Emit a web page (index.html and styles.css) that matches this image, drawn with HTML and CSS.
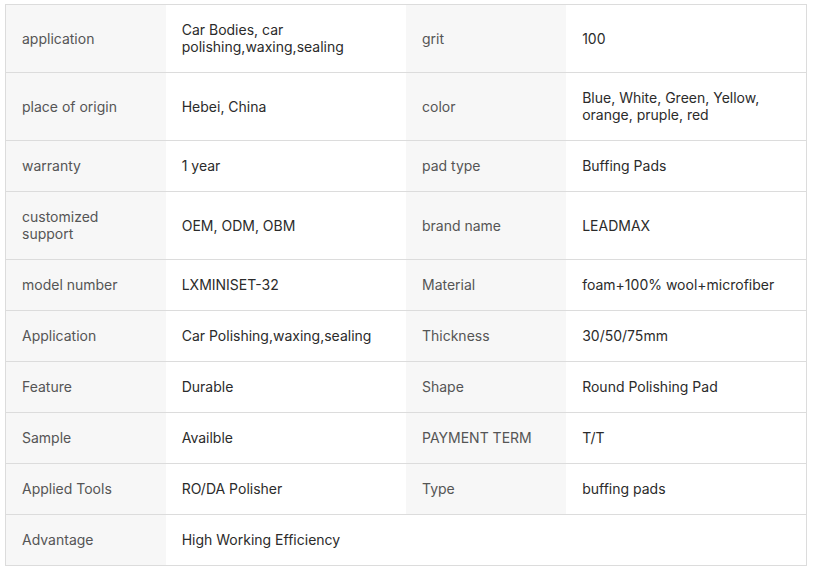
FILE: index.html
```html
<!DOCTYPE html>
<html>
<head>
<meta charset="utf-8">
<link rel="stylesheet" href="styles.css">
</head>
<body>
<div class="wrap">
<table class="spec">
<colgroup><col class="c-label"><col class="c-val"><col class="c-label"><col class="c-val"></colgroup>
<tbody>
<tr><td class="lbl">application</td><td class="val">Car Bodies, car polishing,waxing,sealing</td><td class="lbl">grit</td><td class="val">100</td></tr>
<tr><td class="lbl">place of origin</td><td class="val">Hebei, China</td><td class="lbl">color</td><td class="val">Blue, White, Green, Yellow, orange, pruple, red</td></tr>
<tr><td class="lbl">warranty</td><td class="val">1 year</td><td class="lbl">pad type</td><td class="val">Buffing Pads</td></tr>
<tr><td class="lbl">customized support</td><td class="val">OEM, ODM, OBM</td><td class="lbl">brand name</td><td class="val">LEADMAX</td></tr>
<tr><td class="lbl">model number</td><td class="val">LXMINISET-32</td><td class="lbl">Material</td><td class="val">foam+100% wool+microfiber</td></tr>
<tr><td class="lbl">Application</td><td class="val">Car Polishing,waxing,sealing</td><td class="lbl">Thickness</td><td class="val">30/50/75mm</td></tr>
<tr><td class="lbl">Feature</td><td class="val">Durable</td><td class="lbl">Shape</td><td class="val">Round Polishing Pad</td></tr>
<tr><td class="lbl">Sample</td><td class="val">Availble</td><td class="lbl">PAYMENT TERM</td><td class="val">T/T</td></tr>
<tr><td class="lbl">Applied Tools</td><td class="val">RO/DA Polisher</td><td class="lbl">Type</td><td class="val">buffing pads</td></tr>
<tr><td class="lbl">Advantage</td><td class="val">High Working Efficiency</td><td class="empty"></td><td class="empty"></td></tr>
</tbody>
</table>
</div>
</body>
</html>
```
FILE: styles.css
```css
html, body {
  margin: 0;
  padding: 0;
  background: #fff;
}
.wrap {
  padding: 4px 6px 0 5px;
}
.spec {
  width: 802px;
  border-collapse: collapse;
  table-layout: fixed;
  font-family: Inter, "Noto Sans", sans-serif;
  font-size: 14px;
  line-height: 17px;
  border: 1px solid #dcdcdc;
}
.c-label { width: 160px; }
.c-val { width: 240px; }
.spec td {
  padding: 16px 16px 17px 16px;
  border-top: 1px solid #dcdcdc;
  border-bottom: 1px solid #dcdcdc;
  vertical-align: middle;
}
.lbl {
  background: #f7f7f7;
  color: #555;
}
.val {
  background: #fff;
  color: #2b2b2b;
}
.empty {
  background: #fff;
}
```
